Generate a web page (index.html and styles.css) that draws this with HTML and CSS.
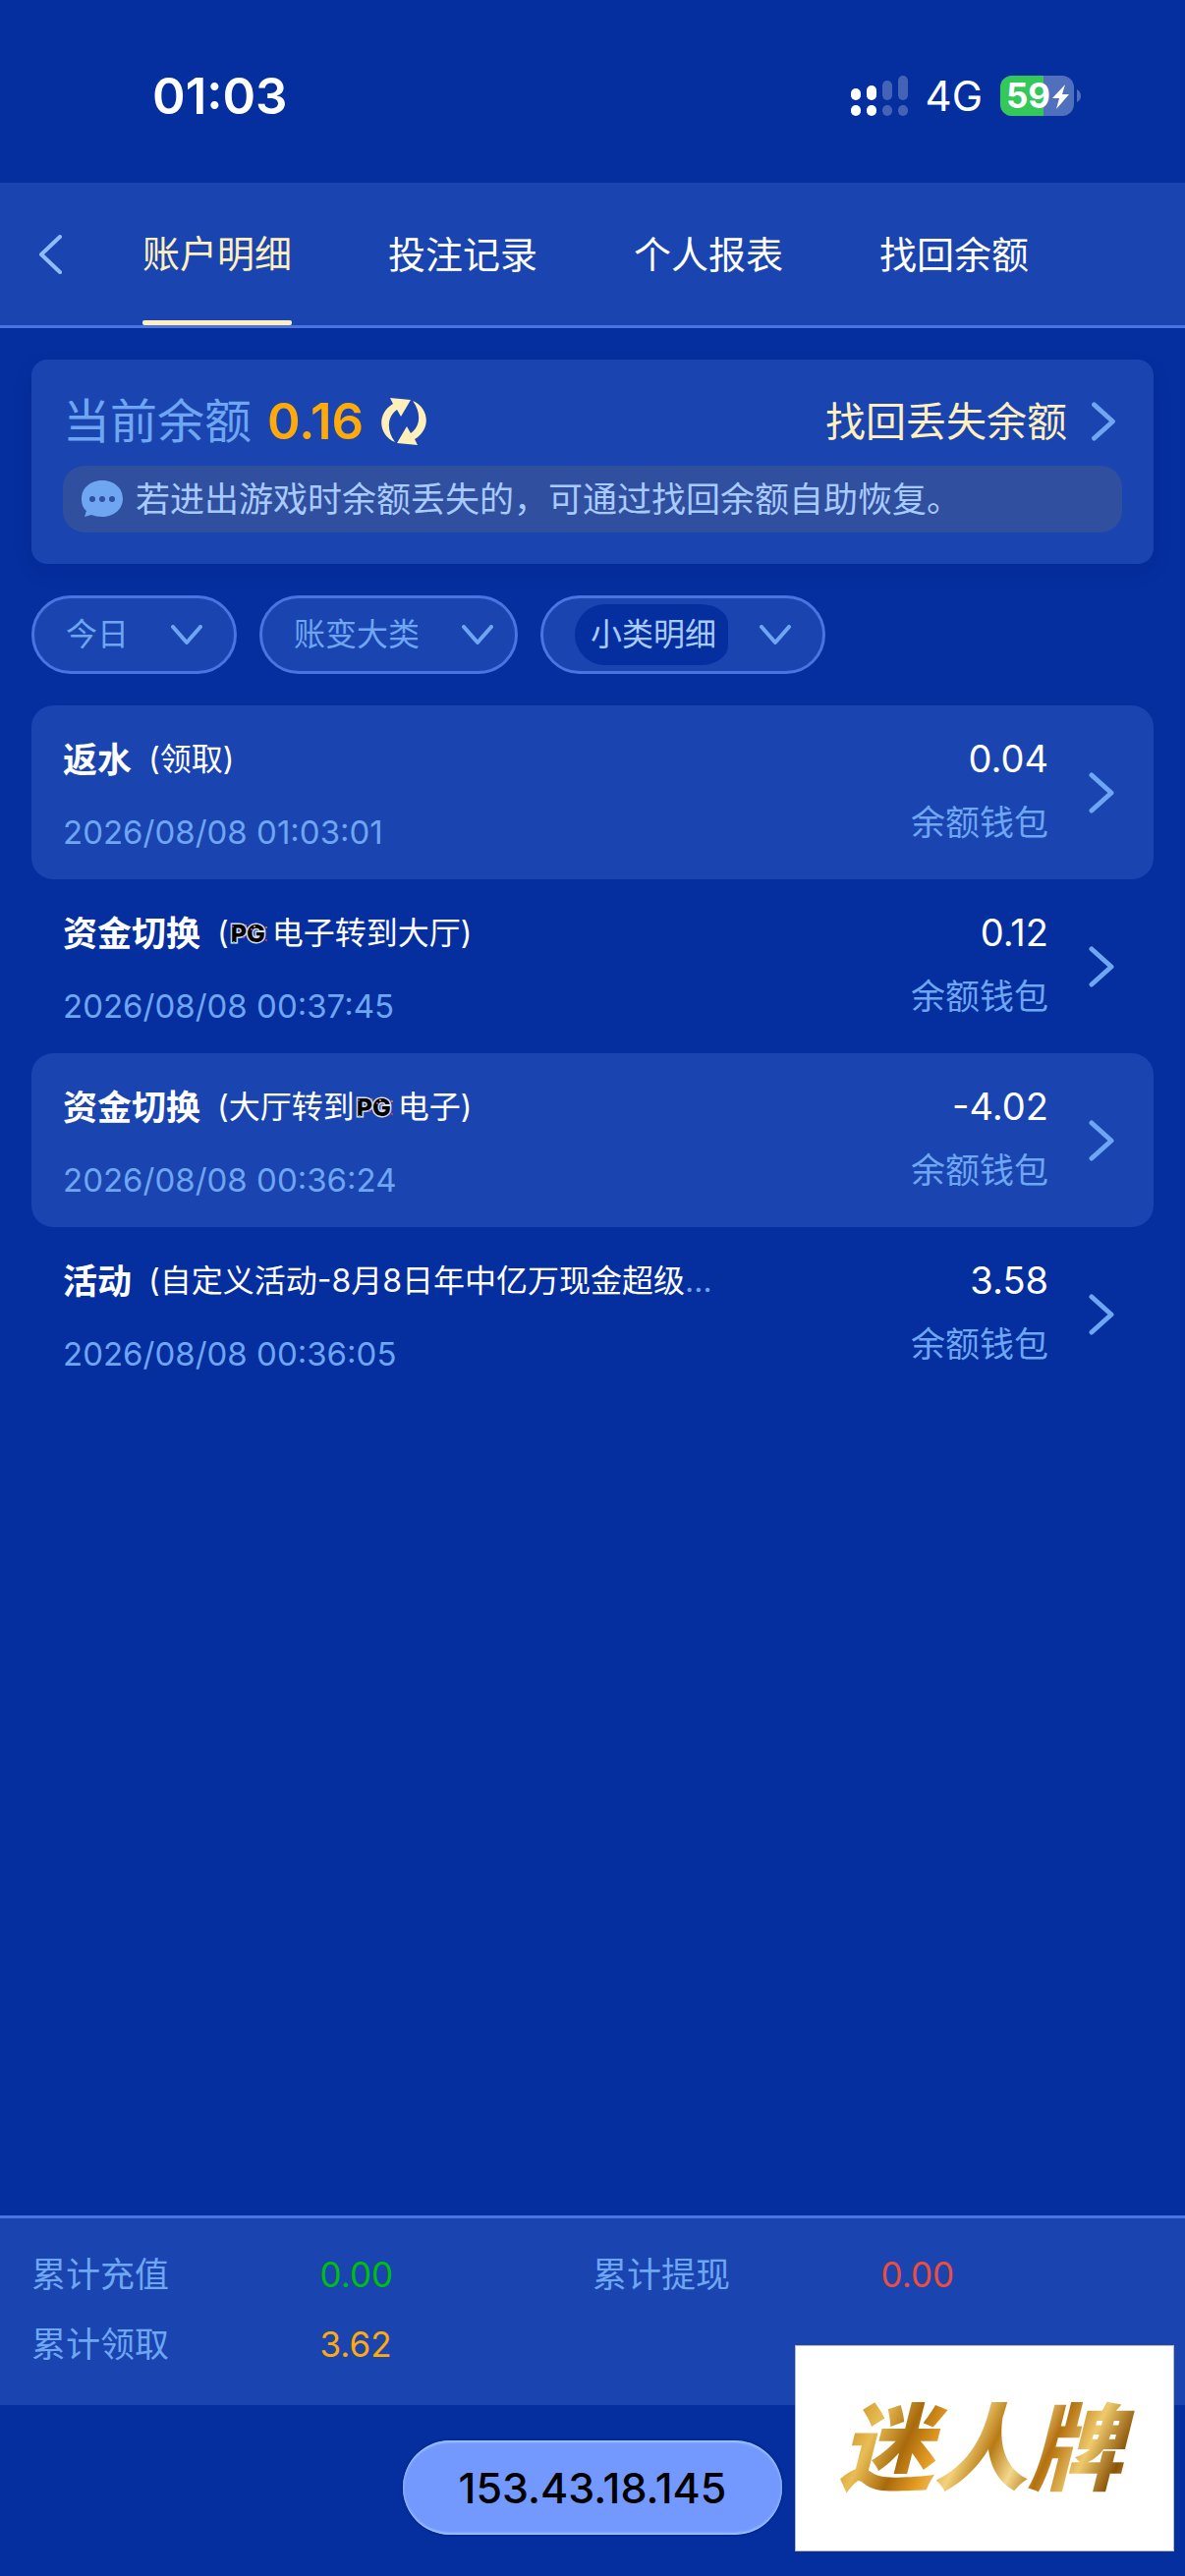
FILE: index.html
```html
<!DOCTYPE html>
<html lang="zh-CN">
<head>
<meta charset="utf-8">
<meta name="viewport" content="width=device-width, initial-scale=1">
<title>账户明细</title>
<link rel="stylesheet" href="styles.css">
</head>
<body>
<svg class="sprite" width="0" height="0" aria-hidden="true">
  <symbol id="chevron-right" viewBox="0 0 26 42"><path d="M3 3L23 21L3 39" fill="none" stroke="currentColor" stroke-width="5" stroke-linecap="round" stroke-linejoin="round"/></symbol>
  <symbol id="chevron-down" viewBox="0 0 32 20"><path d="M2 2L16 18L30 2" fill="none" stroke="currentColor" stroke-width="4" stroke-linecap="round" stroke-linejoin="round"/></symbol>
  <symbol id="pg-specks" viewBox="0 0 40 22">
    <circle cx="2" cy="4" r="1" fill="#7a4bff"/><circle cx="15" cy="3" r="1" fill="#ff8a2a"/><circle cx="13" cy="15" r="1" fill="#ff3ca0"/><circle cx="3" cy="20" r="1" fill="#2ad4e6"/>
    <circle cx="24" cy="4" r="1" fill="#ffb02a"/><circle cx="36" cy="5" r="1" fill="#ff7a2a"/><circle cx="21" cy="7" r="1" fill="#e03cff"/><circle cx="36" cy="18" r="1" fill="#ff3c3c"/>
  </symbol>
</svg>
<div class="page">
  <div class="status">
    <time class="clock">01:03</time>
    <div class="indicators">
      <svg class="signal" width="58" height="42" viewBox="0 0 58 42" fill="#fff" aria-label="信号">
        <rect x="0" y="13" width="10" height="12" rx="5"/><rect x="0" y="30" width="10" height="11" rx="5"/>
        <rect x="16" y="10" width="10" height="15" rx="5"/><rect x="16" y="30" width="10" height="11" rx="5"/>
        <g opacity=".25"><rect x="32" y="5" width="10" height="20" rx="5"/><rect x="32" y="30" width="10" height="11" rx="5"/><rect x="48" y="0" width="10" height="25" rx="5"/><rect x="48" y="30" width="10" height="11" rx="5"/></g>
      </svg>
      <span class="network">4G</span>
      <svg class="battery" width="83" height="42" viewBox="0 0 83 42" aria-label="电量">
        <clipPath id="cell"><rect width="75" height="41" rx="12"/></clipPath>
        <g clip-path="url(#cell)"><rect width="75" height="41" fill="#506fbc"/><rect width="44" height="41" fill="#34c759"/></g>
        <path d="M78 14Q82 16 82 20.500Q82 25 78 27Z" fill="#506fbc"/>
        <text x="6" y="33" font-family="Inter, sans-serif" font-size="35" font-weight="700" fill="#fff">59</text>
        <path d="M66 9L53 23H60L57 34L70 19H63Z" fill="#fff"/>
      </svg>
    </div>
  </div>

  <header class="topbar">
    <button class="back" type="button" aria-label="返回"><svg width="25" height="40" viewBox="0 0 25 40"><path d="M22 2L3 20L22 38" fill="none" stroke="currentColor" stroke-width="4" stroke-linecap="round" stroke-linejoin="round"/></svg></button>
    <nav class="tabs">
      <a class="tab active" href="#detail">账户明细</a>
      <a class="tab" href="#bets">投注记录</a>
      <a class="tab" href="#report">个人报表</a>
      <a class="tab" href="#recover">找回余额</a>
    </nav>
  </header>

  <main class="content">
    <section class="balance">
      <div class="balance-row">
        <span class="balance-label">当前余额</span>
        <strong class="balance-value">0.16</strong>
        <button class="refresh" type="button" aria-label="刷新">
          <svg width="47" height="49" viewBox="0 0 47 49" fill="currentColor"><path id="arrow" d="M9 0L30 2L20 19L16 12C6 19 5 33 14 45C-3 38 -5 16 12 6Z"/><use href="#arrow" transform="rotate(180 23 24)"/></svg>
        </button>
        <a class="recover" href="#recover">找回丢失余额<svg class="chevron" width="26" height="40"><use href="#chevron-right"/></svg></a>
      </div>
      <p class="notice">
        <svg width="44" height="40" viewBox="0 0 44 40"><path fill="#6ea6f2" d="M22 1C33 1 43 8 43 19.500S33 38 22 38C18 38 14 37 11 36L4 38L6 32C2 29 1 24 1 19.500C1 8 11 1 22 1Z"/><g fill="#314f9f"><circle cx="12" cy="20" r="3"/><circle cx="22" cy="20" r="3"/><circle cx="32" cy="20" r="3"/></g></svg>
        <span>若进出游戏时余额丢失的，可通过找回余额自助恢复。</span>
      </p>
    </section>

    <form class="filters">
      <label class="filter"><select aria-label="日期"><option>今日</option></select><svg width="32" height="20"><use href="#chevron-down"/></svg></label>
      <label class="filter category"><select aria-label="账变大类"><option>账变大类</option></select><svg width="32" height="20"><use href="#chevron-down"/></svg></label>
      <label class="filter chosen"><select aria-label="小类明细"><option>小类明细</option></select><svg width="32" height="20"><use href="#chevron-down"/></svg></label>
    </form>

    <ul class="records">
      <li><a class="record" href="#r1">
        <div class="info"><div class="title"><b>返水</b><span class="sub">(领取)</span></div><time class="date">2026/08/08 01:03:01</time></div>
        <div class="amount"><span class="sum">0.04</span><span class="wallet">余额钱包</span></div>
        <svg class="chevron" width="26" height="42"><use href="#chevron-right"/></svg></a></li>
      <li><a class="record" href="#r2">
        <div class="info"><div class="title"><b>资金切换</b><span class="sub">(<span class="pg">PG<svg class="specks" width="40" height="22"><use href="#pg-specks"/></svg></span>电子转到大厅)</span></div><time class="date">2026/08/08 00:37:45</time></div>
        <div class="amount"><span class="sum">0.12</span><span class="wallet">余额钱包</span></div>
        <svg class="chevron" width="26" height="42"><use href="#chevron-right"/></svg></a></li>
      <li><a class="record" href="#r3">
        <div class="info"><div class="title"><b>资金切换</b><span class="sub">(大厅转到<span class="pg">PG<svg class="specks" width="40" height="22"><use href="#pg-specks"/></svg></span>电子)</span></div><time class="date">2026/08/08 00:36:24</time></div>
        <div class="amount"><span class="sum">-4.02</span><span class="wallet">余额钱包</span></div>
        <svg class="chevron" width="26" height="42"><use href="#chevron-right"/></svg></a></li>
      <li><a class="record" href="#r4">
        <div class="info"><div class="title"><b>活动</b><span class="sub">(自定义活动-8月8日年中亿万现金超级</span><span class="more">…</span></div><time class="date">2026/08/08 00:36:05</time></div>
        <div class="amount"><span class="sum">3.58</span><span class="wallet">余额钱包</span></div>
        <svg class="chevron" width="26" height="42"><use href="#chevron-right"/></svg></a></li>
    </ul>
  </main>

  <dl class="summary">
    <dt>累计充值</dt><dd class="green">0.00</dd>
    <dt>累计提现</dt><dd class="red">0.00</dd>
    <dt>累计领取</dt><dd class="orange">3.62</dd>
  </dl>
  <footer class="bottom"><button class="address" type="button">153.43.18.145</button></footer>
  <aside class="brand"><span>迷人牌</span></aside>
</div>
</body>
</html>
```
FILE: styles.css
```css
:root {
  --bg: #052e9f;
  --panel: #1a44b0;
  --line: #4a74e0;
  --muted: #6ea6f2;
  --soft: #a8cbff;
  --cream: #fff0bb;
  --orange: #ffaa09;
}
* { box-sizing: border-box; }
body {
  margin: 0;
  background: var(--bg);
  color: #fff;
  font-family: Inter, "Noto Sans CJK SC", sans-serif;
  font-size: 35px;
  line-height: 48px;
}
a { color: inherit; text-decoration: none; }
button { border: 0; padding: 0; background: none; color: inherit; font: inherit; }
svg { flex: none; display: block; }
.sprite { position: absolute; }

.page { position: relative; display: flex; flex-direction: column; min-height: 100vh; }

.status { display: flex; align-items: center; justify-content: space-between; height: 186px; padding: 10px 105px 0 155px; }
.clock { font-size: 51px; font-weight: 600; }
.indicators { display: flex; align-items: center; }
.network { margin: 0 18px; font-size: 42px; }

.topbar { display: flex; align-items: stretch; height: 148px; padding-left: 39px; background: var(--panel); border-bottom: 3px solid var(--line); }
.back { display: flex; align-items: center; width: 106px; color: #8fbcff; }
.tabs { display: flex; gap: 98px; }
.tab { display: flex; align-items: center; font-size: 38px; }
.tab.active { color: var(--cream); flex-direction: column; justify-content: space-between; padding-top: 48px; }
.tab.active::after { content: ""; width: 100%; height: 5px; border-radius: 2px; background: var(--cream); }

.content { flex: 1; padding: 32px; }
.balance { height: 208px; padding: 32px; border-radius: 16px; background: var(--panel); box-shadow: 0 8px 24px rgba(0, 0, 40, .06); }
.balance-row { display: flex; align-items: center; height: 62px; margin-bottom: 14px; }
.balance-label { font-size: 48px; color: var(--muted); }
.balance-value { margin-left: 16px; font-size: 51px; font-weight: 600; color: var(--orange); }
.refresh { margin-left: 18px; color: var(--cream); }
.recover { display: flex; align-items: center; gap: 24px; margin-left: auto; margin-right: 6px; font-size: 41px; color: var(--cream); }
.recover .chevron { color: var(--muted); }
.notice { display: flex; align-items: center; gap: 12px; height: 68px; margin: 0; padding: 0 18px; border-radius: 22px; background: #314f9f; color: var(--soft); }

.filters { display: flex; gap: 23px; margin-top: 32px; }
.filter { display: flex; align-items: center; gap: 42px; height: 80px; padding: 0 32px; border: 3px solid var(--line); border-radius: 40px; background: var(--panel); color: var(--muted); }
.filter.category { padding-right: 22px; }
select { appearance: none; margin: 0; padding: 0; border: 0; background: none; color: inherit; font: inherit; font-size: 32px; }
.filter select { height: 62px; }
.chosen { gap: 32px; }
.chosen select { padding: 0 11px 0 16px; border-radius: 31px 28px 28px 31px / 31px 20px 20px 31px; background: var(--bg); color: var(--soft); }

.records { margin: 32px 0 0; padding: 0; list-style: none; }
.record { display: flex; align-items: center; height: 177px; padding: 0 40px 0 32px; border-radius: 22px; }
.records li:nth-child(odd) .record { background: var(--panel); }
.info { display: flex; flex-direction: column; gap: 27px; padding-top: 6px; }
.title { display: flex; align-items: center; }
.title b { margin-right: 17px; font-weight: 700; }
.sub { display: flex; align-items: center; font-size: 32px; }
.pg {
  position: relative;
  width: 40px;
  margin: 0 2px;
  color: #000;
  font-size: 25px;
  font-weight: 800;
  -webkit-text-stroke: 3px #d5dcf0;
  paint-order: stroke;
}
.specks { position: absolute; left: 0; top: 13px; }
.more { font-size: 32px; color: var(--muted); }
.date { font-size: 33px; line-height: 46px; color: var(--muted); }
.amount { display: flex; flex-direction: column; align-items: flex-end; gap: 17px; margin-left: auto; margin-right: 41px; padding-bottom: 4px; }
.sum { font-size: 38px; }
.wallet { color: var(--muted); }
.record .chevron { color: var(--muted); }

.summary { display: grid; grid-template-columns: repeat(4, 1fr); row-gap: 23px; align-content: start; height: 193px; margin: 0; padding: 33px 32px 0; border-top: 3px solid var(--line); background: var(--panel); }
.summary dt { color: var(--muted); }
.summary dd { margin: 0; padding-left: 8px; }
.summary .green { color: #00be0c; }
.summary .red { color: #ea4e3d; }
.summary .orange { color: var(--orange); }

.bottom { display: flex; justify-content: center; height: 174px; padding-top: 36px; }
.address { width: 386px; height: 96px; border-radius: 48px; background: #7399ff; box-shadow: inset 0 2px 2px #9cc4ff, inset 0 -2px 2px #9cc4ff, 0 0 3px #001b70; color: #000; font-size: 43px; font-weight: 500; }

.brand { position: absolute; right: 11px; bottom: 25px; display: flex; align-items: center; justify-content: center; width: 386px; height: 210px; border: 1px solid #bbb; background: #fff; }
.brand span {
  padding: 0 16px 0 8px;
  font-size: 96px;
  line-height: 140px;
  font-weight: 900;
  font-style: italic;
  color: transparent;
  background: linear-gradient(115deg, #c58a1c 8%, #e9bd55 18%, #a86a0c 28%, #e39a22 36%, #f3d27c 44%, #b87a14 52%, #f3d88c 60%, #b4700e 68%, #efca6c 78%, #8a5408 88%, #dca63a 96%);
  -webkit-background-clip: text;
  background-clip: text;
}
```
